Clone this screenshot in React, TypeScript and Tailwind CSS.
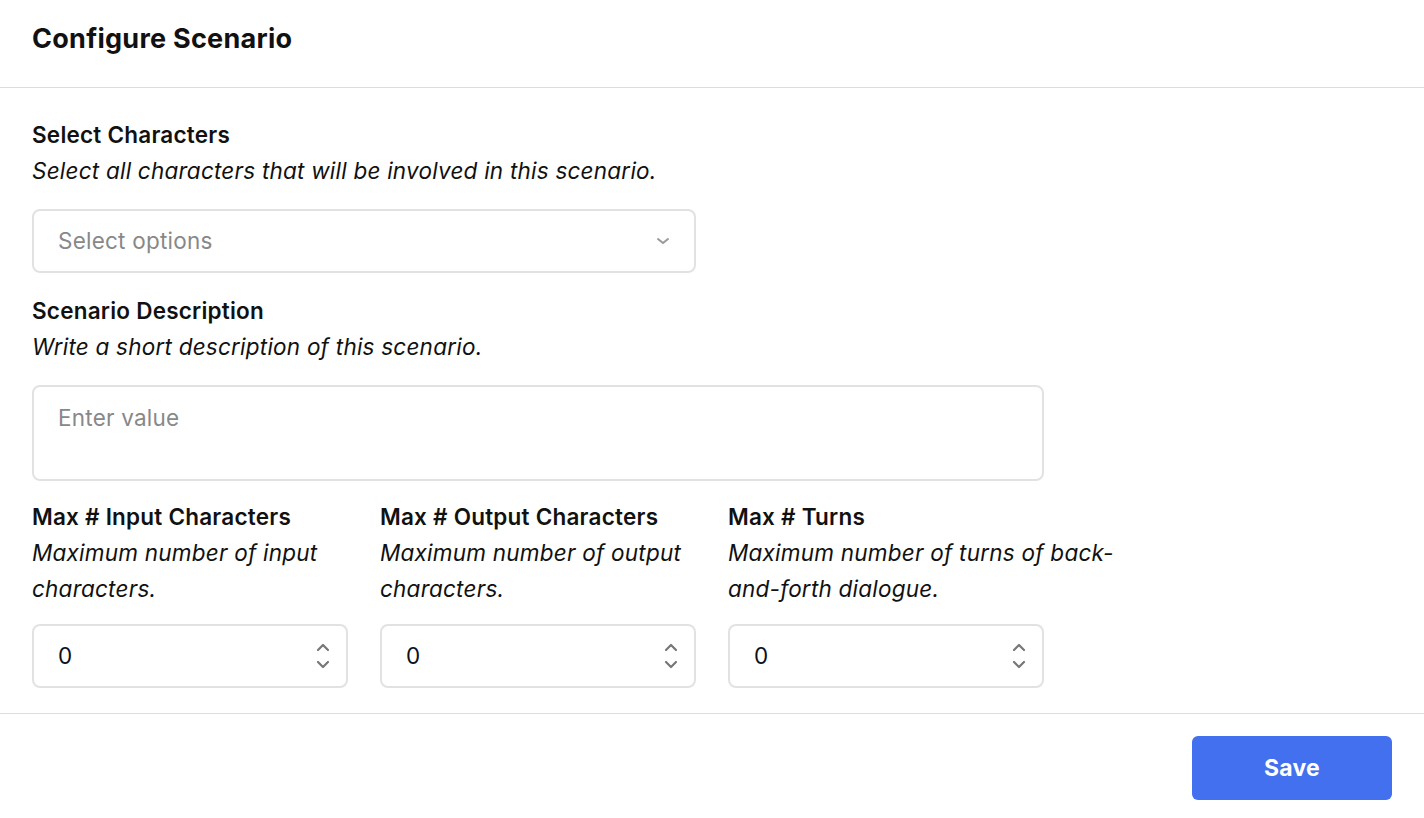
export default function App() {
  const font = { fontFamily: 'Inter, "Noto Sans", sans-serif' };
  const Spinner = () => (
    <svg width="14" height="34" viewBox="0 0 14 34" className="text-[#777]">
      <path d="M2 11 L7 6 L12 11" fill="none" stroke="currentColor" strokeWidth="2.2" strokeLinecap="round" strokeLinejoin="round" />
      <path d="M2 23 L7 28 L12 23" fill="none" stroke="currentColor" strokeWidth="2.2" strokeLinecap="round" strokeLinejoin="round" />
    </svg>
  );
  const nums: [string, React.ReactNode][] = [
    ['Max # Input Characters', 'Maximum number of input characters.'],
    ['Max # Output Characters', 'Maximum number of output characters.'],
    ['Max # Turns', <>Maximum number of turns of back-<br />and-forth dialogue.</>],
  ];
  return (
    <div className="w-[1424px] h-[818px] bg-white text-[#111] text-[22.5px] tracking-[0.01em]" style={font}>
      <div className="h-[88px] border-b border-[#ddd] px-8 flex items-center pb-2">
        <h1 className="text-[27px] font-bold tracking-[0.01em]">Configure Scenario</h1>
      </div>
      <div className="px-8 pt-[37px] h-[626px] border-b border-[#ddd]">
        <div className="font-semibold leading-[36px] -mt-[8px]">Select Characters</div>
        <div className="italic leading-[36px]">Select all characters that will be involved in this scenario.</div>
        <div className="mt-[20px] w-[664px] h-[64px] border-2 border-[#e2e2e2] rounded-lg flex items-center justify-between px-6 text-[#888]">
          <span>Select options</span>
          <svg width="14" height="10" viewBox="0 0 14 10"><path d="M2 3 L7 7 L12 3" fill="none" stroke="#999" strokeWidth="2" strokeLinecap="round" /></svg>
        </div>
        <div className="font-semibold leading-[36px] mt-[20px]">Scenario Description</div>
        <div className="italic leading-[36px]">Write a short description of this scenario.</div>
        <div className="mt-[20px] w-[1012px] h-[96px] border-2 border-[#e2e2e2] rounded-lg px-6 pt-[14px] text-[#888]">Enter value</div>
        <div className="flex gap-[32px] mt-[18px]">
          {nums.map(([t, d]) => (
            <div key={t} className={t === 'Max # Turns' ? 'w-[420px]' : 'w-[316px]'}>
              <div className="font-semibold leading-[36px]">{t}</div>
              <div className="italic leading-[36px] h-[72px]">{d}</div>
              <div className="mt-[17px] w-[316px] h-[64px] border-2 border-[#e2e2e2] rounded-lg flex items-center justify-between pl-6 pr-4">
                <span>0</span>
                <Spinner />
              </div>
            </div>
          ))}
        </div>
      </div>
      <div className="flex justify-end px-8 pt-[22px]">
        <button className="w-[200px] h-[64px] rounded-md bg-[#4270ee] text-white text-[23px] font-bold">Save</button>
      </div>
    </div>
  );
}
